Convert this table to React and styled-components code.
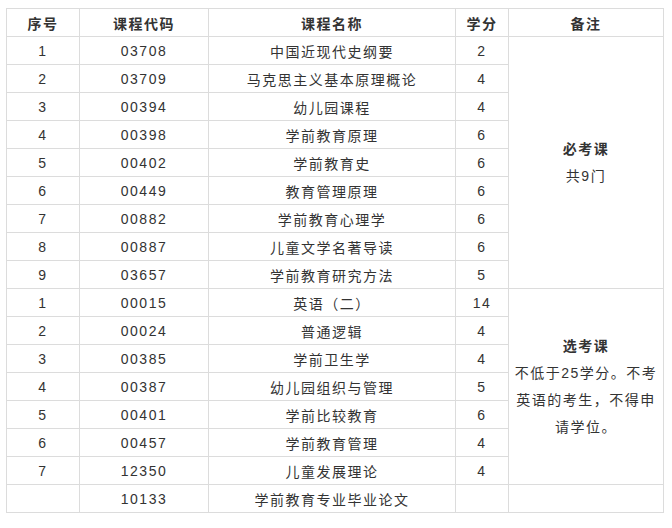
import React from 'react'
import styled, { createGlobalStyle } from 'styled-components'

const GlobalStyle = createGlobalStyle`
  body {
    margin: 0;
    background: #fff;
  }
`

const required = [
  ['1', '03708', '中国近现代史纲要', '2'],
  ['2', '03709', '马克思主义基本原理概论', '4'],
  ['3', '00394', '幼儿园课程', '4'],
  ['4', '00398', '学前教育原理', '6'],
  ['5', '00402', '学前教育史', '6'],
  ['6', '00449', '教育管理原理', '6'],
  ['7', '00882', '学前教育心理学', '6'],
  ['8', '00887', '儿童文学名著导读', '6'],
  ['9', '03657', '学前教育研究方法', '5'],
]

const elective = [
  ['1', '00015', '英语（二）', '14'],
  ['2', '00024', '普通逻辑', '4'],
  ['3', '00385', '学前卫生学', '4'],
  ['4', '00387', '幼儿园组织与管理', '5'],
  ['5', '00401', '学前比较教育', '6'],
  ['6', '00457', '学前教育管理', '4'],
  ['7', '12350', '儿童发展理论', '4'],
]

const Wrap = styled.div`
  padding: 8px 0 0 6px;
`

const Table = styled.table`
  border-collapse: collapse;
  table-layout: fixed;
  width: 657px;
  font-family: "Liberation Sans", "Noto Sans CJK SC", sans-serif;
  font-size: 14px;
  letter-spacing: 1.5px;
  color: #333;
`

const Th = styled.th`
  height: 27px;
  padding: 0;
  border: 1px solid #dcdcdc;
  text-align: center;
  font-weight: bold;
`

const Td = styled.td`
  height: 27px;
  padding: 0;
  border: 1px solid #dcdcdc;
  text-align: center;
  vertical-align: middle;
  white-space: nowrap;
`

const NoteCell = styled.td`
  padding: 0 2px;
  border: 1px solid #dcdcdc;
  text-align: center;
  vertical-align: middle;
  line-height: 27px;
`

const NoteTitle = styled.div`
  font-weight: bold;
`

const Row = ({ item, note }) => (
  <tr>
    <Td>{item[0]}</Td>
    <Td>{item[1]}</Td>
    <Td>{item[2]}</Td>
    <Td>{item[3]}</Td>
    {note}
  </tr>
)

export default function App() {
  return (
    <Wrap>
      <GlobalStyle />
      <Table>
        <colgroup>
          <col style={{ width: 73 }} />
          <col style={{ width: 129 }} />
          <col style={{ width: 247 }} />
          <col style={{ width: 53 }} />
          <col style={{ width: 155 }} />
        </colgroup>
        <thead>
          <tr>
            <Th>序号</Th>
            <Th>课程代码</Th>
            <Th>课程名称</Th>
            <Th>学分</Th>
            <Th>备注</Th>
          </tr>
        </thead>
        <tbody>
          {required.map((item, i) => (
            <Row
              key={'r' + i}
              item={item}
              note={
                i === 0 ? (
                  <NoteCell rowSpan={required.length}>
                    <NoteTitle>必考课</NoteTitle>
                    <div>共9门</div>
                  </NoteCell>
                ) : null
              }
            />
          ))}
          {elective.map((item, i) => (
            <Row
              key={'e' + i}
              item={item}
              note={
                i === 0 ? (
                  <NoteCell rowSpan={elective.length}>
                    <NoteTitle>选考课</NoteTitle>
                    <div>不低于25学分。不考英语的考生，不得申请学位。</div>
                  </NoteCell>
                ) : null
              }
            />
          ))}
          <Row item={['', '10133', '学前教育专业毕业论文', '']} note={<Td />} />
        </tbody>
      </Table>
    </Wrap>
  )
}
